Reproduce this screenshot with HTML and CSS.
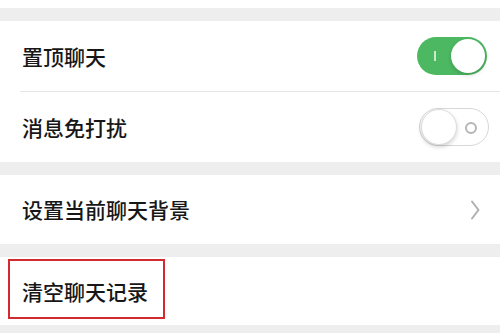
FILE: index.html
```html
<!DOCTYPE html>
<html lang="zh-CN">
<head>
    <meta charset="UTF-8">
    <meta name="viewport" content="width=device-width, initial-scale=1.0">
    <title>聊天信息</title>
    <link rel="stylesheet" href="styles.css">
</head>
<body>
    <div class="top-strip"></div>

    <div class="group">
        <div class="cell">
            <span class="label">置顶聊天</span>
            <div class="switch on"><span class="mark-i"></span><span class="knob"></span></div>
        </div>
        <div class="divider"></div>
        <div class="cell">
            <span class="label">消息免打扰</span>
            <div class="switch off"><span class="knob"></span><span class="mark-o"></span></div>
        </div>
    </div>

    <div class="group">
        <div class="cell short">
            <span class="label">设置当前聊天背景</span>
            <svg class="chevron" width="10" height="22" viewBox="0 0 10 22">
                <path d="M2 2.5 L8.5 11 L2 19.5" fill="none" stroke="#b0b0b0" stroke-width="2" stroke-linecap="round" stroke-linejoin="round"/>
            </svg>
        </div>
    </div>

    <div class="group">
        <div class="cell last">
            <span class="label">清空聊天记录</span>
            <div class="highlight"></div>
        </div>
    </div>
</body>
</html>
```

FILE: styles.css
```css
body {
    margin: 0;
    background-color: #eeeeee;
    font-family: "Noto Sans CJK SC", "Noto Sans", sans-serif;
    color: #171717;
    overflow: hidden;
}
.top-strip {
    height: 8px;
    background: #fff;
    margin-bottom: 13px;
}
.group {
    background: #fff;
    margin-bottom: 13px;
}
.cell {
    position: relative;
    display: flex;
    align-items: center;
    justify-content: space-between;
    height: 70px;
    padding: 0 13px 0 22px;
}
.cell.short {
    height: 69px;
    padding-right: 20px;
}
.cell.last {
    height: 68px;
}
.label {
    font-size: 21px;
    font-weight: 500;
    line-height: 1;
}
.divider {
    height: 1px;
    margin-left: 20px;
    background: #e6e6e6;
}
.switch {
    position: relative;
    width: 70px;
    height: 38px;
    border-radius: 19px;
    box-sizing: border-box;
    display: flex;
    align-items: center;
}
.switch.on {
    background: #4db862;
    justify-content: flex-end;
    padding-right: 2px;
}
.switch.off {
    background: #fff;
    border: 1.5px solid #d8d8d8;
    padding-left: 1px;
    margin-right: -2px;
}
.knob {
    width: 34px;
    height: 34px;
    border-radius: 50%;
    background: #fff;
    box-shadow: 0 2px 4px rgba(0,0,0,0.18);
}
.switch.off .knob {
    border: 1px solid #dcdcdc;
}
.mark-i {
    position: absolute;
    left: 17px;
    top: 14px;
    width: 2px;
    height: 10px;
    background: rgba(255,255,255,0.7);
}
.mark-o {
    position: absolute;
    right: 11px;
    top: 13px;
    width: 8px;
    height: 8px;
    border: 2px solid #b5b5b5;
    border-radius: 50%;
}
.highlight {
    position: absolute;
    left: 8px;
    top: 2px;
    width: 157px;
    height: 60px;
    box-sizing: border-box;
    border: 2px solid #d22a30;
}
```
